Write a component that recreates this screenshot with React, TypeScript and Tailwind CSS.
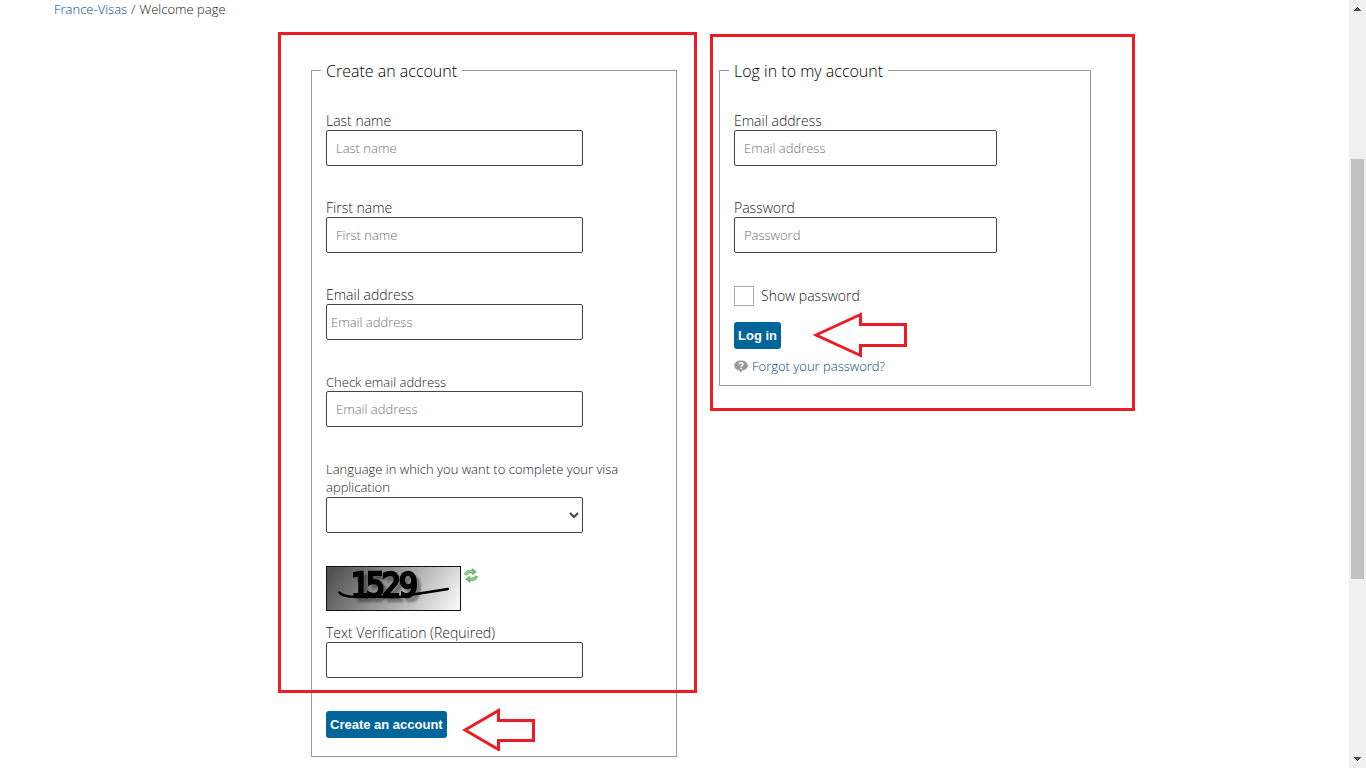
import { useState } from 'react'
import type { ComponentProps, ReactNode } from 'react'
import { clsx } from 'clsx'

const CONTROL =
  'block h-9 w-[257px] max-w-full rounded-xs border border-[#444] bg-white text-[13px] text-[#444] placeholder:text-[#707070]'

interface FieldProps extends ComponentProps<'input'> {
  id: string
  label: string
  small?: boolean
}

function Field({ id, label, small, className, ...rest }: FieldProps) {
  return (
    <div>
      <label htmlFor={id} className={clsx('block leading-[18px]', small ? 'text-[13px]' : 'text-sm')}>
        {label}
      </label>
      <input id={id} className={clsx(CONTROL, className ?? 'px-[9px]')} {...rest} />
    </div>
  )
}

function Panel({ title, className, children }: { title: string; className: string; children: ReactNode }) {
  return (
    <fieldset className={clsx('min-w-0 border border-[#999] px-[9px]', className)}>
      <legend className="px-[5px] pt-0.5 text-base leading-6 text-black">{title}</legend>
      <div className="px-[5px] pt-[29px]">{children}</div>
    </fieldset>
  )
}

function PrimaryButton({ children }: { children: ReactNode }) {
  return (
    <button
      type="button"
      className="block h-[27px] rounded-[3px] bg-[#006699] px-1 font-['Liberation_Sans',Arial,sans-serif] text-[13px] font-bold whitespace-nowrap text-white"
    >
      {children}
    </button>
  )
}

function Captcha() {
  return (
    <svg width="135" height="45" viewBox="0 0 135 45" role="img" aria-label="Verification code">
      <defs>
        <linearGradient id="captcha-bg" gradientUnits="userSpaceOnUse" x1="18" y1="-12" x2="118" y2="57">
          <stop offset="0" stopColor="#525152" />
          <stop offset="0.5" stopColor="#a2a0a2" />
          <stop offset="1" stopColor="#f6f6f6" />
        </linearGradient>
        <filter id="captcha-shadow" x="-20%" y="-20%" width="150%" height="150%">
          <feDropShadow dx="4" dy="4" stdDeviation="1" floodColor="#000" floodOpacity="0.35" />
        </filter>
      </defs>
      <rect x="0.5" y="0.5" width="134" height="44" fill="url(#captcha-bg)" stroke="#111" />
      <g filter="url(#captcha-shadow)">
        <text
          y="31"
          fontFamily="'DejaVu Sans Condensed', 'DejaVu Sans', sans-serif"
          fontSize="33"
          fontWeight="400"
          stroke="#000"
          strokeWidth="2.500"
        >
          <tspan x="25">1</tspan>
          <tspan x="40">5</tspan>
          <tspan x="56">2</tspan>
          <tspan x="73">9</tspan>
        </text>
      </g>
      <path
        d="M13.500 26.500C16 29.500 18 29.500 24 30.500L74 31L87 28.500L122 23"
        fill="none"
        stroke="#000"
        strokeWidth="2.500"
        strokeLinecap="round"
      />
    </svg>
  )
}

function RefreshIcon() {
  return (
    <svg width="14" height="15" viewBox="0 0 14 15" aria-hidden="true">
      <g fill="#79bd77" stroke="#559a56" strokeWidth="0.5" strokeLinejoin="round">
        <path d="M0.500 6.500C1 3 4.500 1.800 8 2.300V0.500L12.500 3.800L8.500 7V5.300C5.500 4.800 3.500 5.200 2.500 7.300Z" />
        <path d="M13.500 8.500C13 12 9.500 13.200 6 12.700V14.500L1.500 11.200L5.500 8V9.700C8.500 10.200 10.500 9.800 11.500 7.700Z" />
      </g>
      <path d="M1.600 5.900C2.500 4 4.800 3.200 8.600 3.500" fill="none" stroke="#b4e0b0" strokeWidth="0.8" />
      <path d="M12.400 9.100C11.500 11 9.200 11.900 5.500 11.500" fill="none" stroke="#a5d6a1" strokeWidth="0.8" />
    </svg>
  )
}

function HelpIcon() {
  return (
    <svg width="14" height="13" viewBox="0 0 14 13" aria-hidden="true">
      <path
        d="M7 0.500C10.800 0.500 13.800 2.600 13.800 5.500C13.800 8.200 11.300 10.200 8.200 10.500L6.800 12.800L5.300 10.400C2.300 10 0.200 8 0.200 5.500C0.200 2.600 3.200 0.500 7 0.500Z"
        fill="#999"
      />
      <path d="M5 4.300C5.200 2.200 9.200 2.200 9 4.300C8.900 5.500 7.200 5.400 7.200 6.900" fill="none" stroke="#fff" strokeWidth="1.400" />
      <rect x="6.500" y="7.900" width="1.500" height="1.400" fill="#fff" />
    </svg>
  )
}

function ScrollTrack() {
  return (
    <div aria-hidden="true" className="flex w-[17px] shrink-0 flex-col bg-[#f0f0f0] px-0.5">
      <svg className="h-[17px] w-[13px] shrink-0" viewBox="0 0 13 17" shapeRendering="crispEdges">
        <path d="M3 11V10H4V9H5V8H6V7H7V8H8V9H9V10H10V11Z" fill="#505050" />
      </svg>
      <div className="grow-[142]" />
      <div className="grow-[420] bg-[#c1c1c1]" />
      <div className="grow-[172]" />
      <svg className="h-[17px] w-[13px] shrink-0" viewBox="0 0 13 17" shapeRendering="crispEdges">
        <path d="M3 6V7H4V8H5V9H6V10H7V9H8V8H9V7H10V6Z" fill="#505050" />
      </svg>
    </div>
  )
}

export default function App() {
  const [showPassword, setShowPassword] = useState(false)

  return (
    <div className="flex min-h-screen bg-white font-['Open_Sans',sans-serif] font-light text-[#222]">
      <div className="min-w-0 flex-1">
        <nav aria-label="Breadcrumb" className="flex gap-1 pl-[54px] text-[13px] leading-[18px]">
          <a href="#" className="text-[#004a86]">
            France-Visas
          </a>
          <span>/</span>
          <span>Welcome page</span>
        </nav>

        <main className="grid grid-cols-[311fr_366fr_42fr_372fr_258fr] items-start pt-[39px]">
          <form className="relative col-start-2">
            <Panel title="Create an account" className="pb-[18px]">
              <div className="flex flex-col gap-[33px]">
                <Field id="last-name" label="Last name" placeholder="Last name" />
                <Field id="first-name" label="First name" placeholder="First name" />
                <Field id="email" type="email" label="Email address" placeholder="Email address" className="px-1" />
                <Field id="email-check" type="email" label="Check email address" placeholder="Email address" small />
              </div>

              <div className="mt-[33px]">
                <label htmlFor="language" className="block pb-px text-[13px] leading-[18px]">
                  Language in which you want to complete your visa application
                </label>
                <select id="language" className={CONTROL} />
              </div>

              <div className="mt-[33px] mb-[13px] flex items-start gap-[3px]">
                <Captcha />
                <button type="button" aria-label="New code" className="mt-0.5">
                  <RefreshIcon />
                </button>
              </div>
              <Field id="verification" label="Text Verification (Required)" />

              <div className="mt-[33px]">
                <PrimaryButton>Create an account</PrimaryButton>
              </div>
            </Panel>

            <div className="pointer-events-none absolute -top-[25px] -right-5 -left-[33px] h-[661px] border-3 border-[#ed1c24]" />
            <svg
              className="pointer-events-none absolute bottom-1.5 left-[151px]"
              width="74"
              height="43"
              viewBox="0 0 74 43"
              fill="none"
              stroke="#ed1c24"
              strokeWidth="3"
              aria-hidden="true"
            >
              <path d="M3 22L36.500 2.500V12.500H71.500V32.500H36.500V41.500Z" />
            </svg>
          </form>

          <form className="relative col-start-4">
            <Panel title="Log in to my account" className="pb-[10px]">
              <div className="flex flex-col gap-[33px]">
                <Field id="login-email" type="email" label="Email address" placeholder="Email address" className="w-[263px] px-[9px]" />
                <Field
                  id="login-password"
                  type={showPassword ? 'text' : 'password'}
                  label="Password"
                  placeholder="Password"
                  className="w-[263px] px-[9px]"
                />
              </div>

              <div className="mt-[33px] mb-4 flex items-center gap-[7px]">
                <input
                  id="show-password"
                  type="checkbox"
                  checked={showPassword}
                  onChange={(e) => setShowPassword(e.target.checked)}
                  className="size-5 appearance-none border border-[#aaa] bg-white checked:bg-[#006699]"
                />
                <label htmlFor="show-password" className="text-sm leading-[18px]">
                  Show password
                </label>
              </div>

              <PrimaryButton>Log in</PrimaryButton>

              <a href="#" className="mt-2 flex w-fit items-center gap-1 text-[13px] leading-[18px] text-[#004a86]">
                <HelpIcon />
                Forgot your password?
              </a>
            </Panel>

            <div className="pointer-events-none absolute -top-[23px] -right-11 -left-[9px] h-[377px] border-3 border-[#ed1c24]" />
            <svg
              className="pointer-events-none absolute bottom-7 left-[94px]"
              width="95"
              height="46"
              viewBox="0 0 95 46"
              fill="none"
              stroke="#ed1c24"
              strokeWidth="3"
              aria-hidden="true"
            >
              <path d="M3 23L47.500 2.500V12.500H92.500V33.500H47.500V43.500Z" />
            </svg>
          </form>
        </main>
      </div>
      <ScrollTrack />
    </div>
  )
}
